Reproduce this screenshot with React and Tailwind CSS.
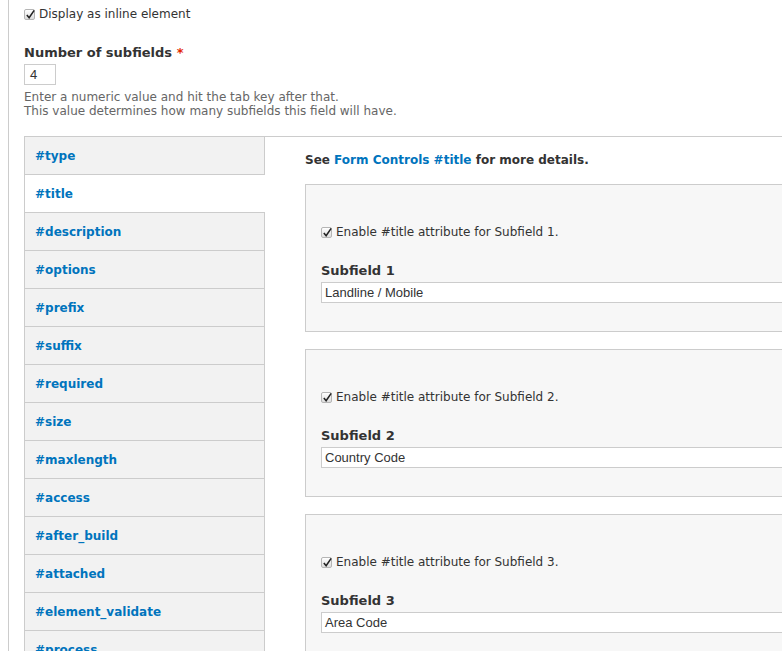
import React from "react";

const tabs = [
  "#type", "#title", "#description", "#options", "#prefix", "#suffix", "#required",
  "#size", "#maxlength", "#access", "#after_build", "#attached", "#element_validate", "#process",
];

const subfields = [
  { n: 1, value: "Landline / Mobile" },
  { n: 2, value: "Country Code" },
  { n: 3, value: "Area Code" },
];

const Check = () => (
  <span className="inline-flex items-center justify-center w-[11px] h-[11px] rounded-[2px] border border-[#b5b5b5] bg-gradient-to-b from-white to-[#ddd] mr-[4px] relative">
    <svg viewBox="0 0 12 12" className="absolute w-[11px] h-[11px] -top-[1px] left-[0px]">
      <path d="M2 6.5 L4.5 9.5 L10 1.5" fill="none" stroke="#222" strokeWidth="1.7" />
    </svg>
  </span>
);

export default function App() {
  return (
    <div className="h-[651px] w-[782px] overflow-hidden bg-white text-[#333] font-[DejaVu_Sans,sans-serif]">
      <div className="ml-[8px] border-l border-[#ccc] h-full pl-[15px] pt-[7px]">
        <div className="flex items-center text-[12px] h-[14px]">
          <Check />
          <span>Display as inline element</span>
        </div>

        <div className="mt-[24px] text-[13px] font-bold h-[16px] leading-[16px]">
          Number of subfields <span className="text-[#e32700]">*</span>
        </div>
        <div className="mt-[3px] w-[32px] h-[21px] border border-[#ccc] text-[13px] leading-[19px] pl-[5px] font-[Liberation_Sans,sans-serif]">4</div>
        <div className="mt-[5px] text-[12px] leading-[14px] text-[#666]">
          Enter a numeric value and hit the tab key after that.
          <br />
          This value determines how many subfields this field will have.
        </div>

        <div className="mt-[18px] flex border-t border-[#ccc] w-[900px]">
          <div className="w-[241px] shrink-0 border-l border-[#ccc] border-r">
            {tabs.map((t) => (
              <div
                key={t}
                className={`h-[38px] border-b border-[#ccc] pl-[10px] flex items-center text-[12px] font-bold text-[#0074bd] ${
                  t === "#title" ? "bg-white -mr-[1px]" : "bg-[#f2f2f2]"
                }`}
              >
                {t}
              </div>
            ))}
          </div>
          <div className="flex-1 pl-[40px] pt-[15px]">
            <div className="text-[12px] font-bold h-[16px] leading-[16px]">
              See <span className="text-[#0074bd]">Form Controls #title</span> for more details.
            </div>
            <div className="mt-[16px] flex flex-col gap-[17px]">
              {subfields.map((s) => (
                <div key={s.n} className="h-[148px] bg-[#f7f7f7] border border-[#ccc] pl-[15px] pt-[40px]">
                  <div className="flex items-center text-[12px] h-[14px]">
                    <Check />
                    <span>Enable #title attribute for Subfield {s.n}.</span>
                  </div>
                  <div className="mt-[24px] text-[13px] font-bold h-[16px] leading-[16px]">Subfield {s.n}</div>
                  <div className="mt-[3px] h-[21px] bg-white border border-[#ccc] text-[13px] leading-[19px] pl-[3px] font-[Liberation_Sans,sans-serif] text-[#333]">
                    {s.value}
                  </div>
                </div>
              ))}
            </div>
          </div>
        </div>
      </div>
    </div>
  );
}
